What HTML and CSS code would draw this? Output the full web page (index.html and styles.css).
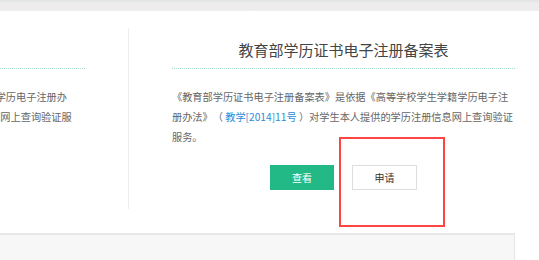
FILE: index.html
```html
<!DOCTYPE html>
<html lang="zh-CN">
<head>
    <meta charset="UTF-8">
    <meta name="viewport" content="width=device-width, initial-scale=1.0">
    <title>学历证书电子注册备案表</title>
    <link rel="stylesheet" href="styles.css">
</head>
<body>
    <div class="topbar"></div>

    <div class="main">
        <div class="columns">
            <div class="col">
                <h2 class="col-title">教育部学籍在线验证报告</h2>
                <p class="col-text">《教育部学籍在线验证报告》是依据《高等学校学生学籍学历电子注册办法》（ <a href="#">教学[2014]11号</a> ）对在校学生的学籍学历注册信息网上查询验证服务。</p>
                <div class="actions">
                    <button class="btn btn-primary">查看</button>
                    <button class="btn">申请</button>
                </div>
            </div>

            <div class="col col-right">
                <h2 class="col-title">教育部学历证书电子注册备案表</h2>
                <p class="col-text">《教育部学历证书电子注册备案表》是依据《高等学校学生学籍学历电子注册办法》（ <a href="#">教学[2014]11号</a> ）对学生本人提供的学历注册信息网上查询验证服务。</p>
                <div class="actions">
                    <button class="btn btn-primary">查看</button>
                    <button class="btn">申请</button>
                </div>
            </div>
        </div>

        <div class="bottom-box"></div>
    </div>

    <!-- highlight box drawn over the page -->
    <div class="highlight"></div>
</body>
</html>
```

FILE: styles.css
```css
html, body {
    margin: 0;
    padding: 0;
}
body {
    position: relative;
    width: 539px;
    height: 260px;
    overflow: hidden;
    background: #fff;
    font-family: "Noto Sans CJK SC", "Microsoft YaHei", sans-serif;
    color: #666;
}
.topbar {
    height: 11px;
    background: linear-gradient(to bottom, #e2e5e5 0, #ececec 3px, #eeeeee 100%);
}
.main {
    margin-left: -302px;
    width: 862px;
}
.columns {
    display: flex;
    margin-top: 17px;
}
.col {
    box-sizing: border-box;
    width: 430px;
    padding: 12px 43px 19px;
}
.col-right {
    width: 431px;
    border-left: 1px solid #eeeeee;
    padding-right: 44px;
}
.col-title {
    margin: 0;
    padding-bottom: 8px;
    border-bottom: 1px dotted #a9ddd2;
    font-size: 15px;
    line-height: 20px;
    font-weight: normal;
    color: #444;
    text-align: center;
}
.col-text {
    margin: 18px 0 0;
    font-size: 10.2px;
    line-height: 20px;
    color: #666;
    text-spacing-trim: space-all;
}
.col-text a {
    color: #2d8cd6;
    text-decoration: none;
}
.actions {
    display: flex;
    justify-content: center;
    gap: 18px;
    margin-top: 18px;
}
.btn {
    box-sizing: border-box;
    width: 65px;
    height: 25px;
    padding: 0;
    border: 1px solid #dedede;
    background: #fff;
    color: #333;
    font-family: inherit;
    font-size: 10px;
    cursor: pointer;
}
.btn-primary {
    width: 64px;
    border-color: #22b987;
    background: #22b987;
    color: #fff;
}
.bottom-box {
    box-sizing: border-box;
    width: 817px;
    height: 40px;
    margin-top: 24px;
    border-top: 2px solid #e8e8e8;
    border-right: 1px solid #e6e6e6;
    background: #f7f7f7;
}
.highlight {
    position: absolute;
    left: 339px;
    top: 137px;
    width: 106px;
    height: 90px;
    box-sizing: border-box;
    border: 2px solid #ff4444;
}
```
